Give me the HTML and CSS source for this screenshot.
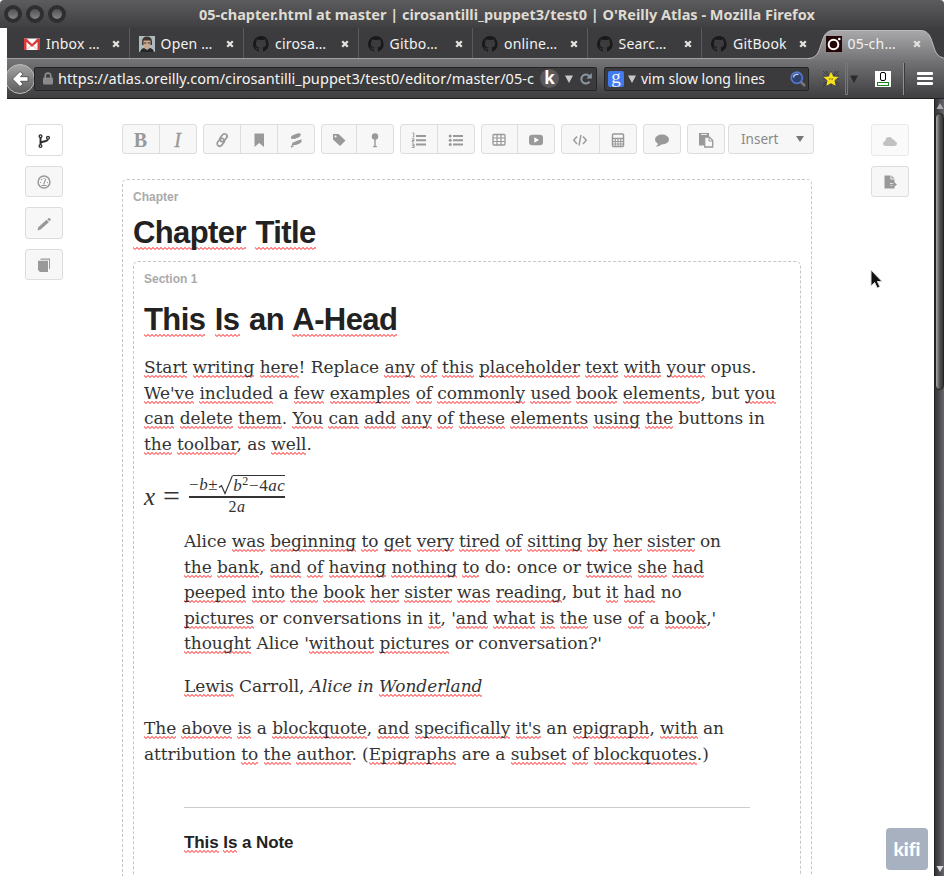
FILE: index.html
```html
<!DOCTYPE html>
<html lang="en">
<head>
<meta charset="utf-8">
<title>05-chapter.html at master</title>
<link rel="stylesheet" href="styles.css">
</head>
<body>
<svg width="0" height="0" class="defs">
  <symbol id="gh" viewBox="0 0 16 16"><path fill="#191919" d="M8 0a8 8 0 0 0-2.500 15.600c.4.100.500-.2.500-.4v-1.500c-2.200.5-2.700-1-2.700-1-.4-.9-.9-1.200-.9-1.200-.7-.5.1-.5.1-.5.8.1 1.200.8 1.200.8.7 1.200 1.900.9 2.300.7.1-.5.3-.9.500-1.100-1.800-.2-3.600-.9-3.600-4 0-.9.300-1.600.8-2.100-.1-.2-.4-1 .1-2.100 0 0 .7-.2 2.200.8a7.600 7.600 0 0 1 4 0c1.500-1 2.200-.8 2.200-.8.4 1.100.2 1.900.1 2.100.5.600.8 1.300.8 2.100 0 3.100-1.900 3.700-3.700 3.900.3.300.6.700.6 1.500v2.200c0 .2.100.5.500.4A8 8 0 0 0 8 0z"/></symbol>
  <symbol id="close" viewBox="0 0 8 8"><path d="M1.200 1.200l5.600 5.600M6.800 1.200L1.200 6.800" stroke="#e2e2de" stroke-width="2.300" fill="none"/></symbol>
</svg>
<div class="window">
  <header class="titlebar">
    <div class="lights"><i></i><i></i><i></i></div>
    <div class="wtitle">05-chapter.html at master | cirosantilli_puppet3/test0 | O'Reilly Atlas - Mozilla Firefox</div>
  </header>
  <nav class="tabs">
    <div class="tab"><svg class="fav" viewBox="0 0 16 16"><path fill="#fff" d="M0 2.500h16v11.500H0z"/><path fill="#d93a3a" d="M0 2.500h2.500L8 8l5.500-5.500H16V14h-2.500V6L8 11 2.500 6v8H0z"/><path d="M3 13.500l4-4M13 13.500l-4-4" stroke="#e6a5a5" fill="none"/></svg><span class="tt">Inbox …</span><svg class="x"><use href="#close"/></svg></div>
    <div class="tab"><svg class="fav" viewBox="0 0 16 16"><path fill="#aebbc0" d="M0 0h16v16H0z"/><path fill="#40362f" d="M3 6q0-5.500 5-5.500T13 6v3H3z"/><path fill="#c9a88f" d="M4.500 4.500h7V9q-.5 4.500-3.500 4.500T4.500 9z"/><path fill="#3a2e29" d="M5 6.500h2.300v1H5zM8.700 6.500H11v1H8.700z"/><path fill="#24282b" d="M1 16q1-3.500 4-4l3 2 3-2q3 .5 4 4z"/></svg><span class="tt">Open …</span><svg class="x"><use href="#close"/></svg></div>
    <div class="tab"><svg class="fav"><use href="#gh"/></svg><span class="tt">cirosa…</span><svg class="x"><use href="#close"/></svg></div>
    <div class="tab"><svg class="fav"><use href="#gh"/></svg><span class="tt">Gitbo…</span><svg class="x"><use href="#close"/></svg></div>
    <div class="tab"><svg class="fav"><use href="#gh"/></svg><span class="tt">online…</span><svg class="x"><use href="#close"/></svg></div>
    <div class="tab"><svg class="fav"><use href="#gh"/></svg><span class="tt">Searc…</span><svg class="x"><use href="#close"/></svg></div>
    <div class="tab last"><svg class="fav"><use href="#gh"/></svg><span class="tt">GitBook</span><svg class="x"><use href="#close"/></svg></div>
    <div class="tab active"><svg class="shape" viewBox="0 0 140 30"><defs><linearGradient id="tg" x2="0" y2="1"><stop offset="0" stop-color="#a9a9ab"/><stop offset="1" stop-color="#757577"/></linearGradient></defs><path fill="url(#tg)" d="M0 30v-1.500q8 0 11-8l4-12Q18 .5 25 .5h88q7 0 10 8l4 12q3 8 13 8V30z"/><path fill="none" stroke="#bbb" d="M0 28.500q8 0 11-8l4-12Q18 .5 25 .5h88q7 0 10 8l4 12q3 8 13 8"/></svg><svg class="fav" viewBox="0 0 16 16"><path fill="#250606" d="M0 0h16v16H0z"/><circle cx="7.500" cy="8.500" r="4.800" fill="none" stroke="#fff" stroke-width="2"/><circle cx="13.300" cy="3" r="1.300" fill="#fff"/></svg><span class="tt">05-ch…</span><svg class="x"><use href="#close"/></svg></div>
  </nav>
  <div class="navbar">
    <svg class="back" viewBox="0 0 30 32"><defs><linearGradient id="bg" x2="0" y2="1"><stop offset="0" stop-color="#a5a5a5"/><stop offset="1" stop-color="#5b5b5b"/></linearGradient></defs><circle cx="13" cy="16" r="14.500" fill="url(#bg)" stroke="#bcbcbc"/><path d="M5.500 16L13 8.500l3 2.500-2.500 2.700H21v4.600h-7.500L16 21l-3 2.500z" fill="#fff" stroke="#444" stroke-width=".8"/></svg>
    <div class="url"><svg class="lock" viewBox="0 0 10 13"><path d="M2.200 6V4a2.800 2.800 0 0 1 5.600 0v2" fill="none" stroke="#8b8b8b" stroke-width="1.700"/><rect y="5.500" width="10" height="7" rx="1" fill="#8b8b8b"/></svg><span class="addr">https://atlas.oreilly.com/cirosantilli_puppet3/test0/editor/master/05-c</span><b class="k">k</b><svg class="dd" viewBox="0 0 8 8"><path d="M0 .5h8L4 8z" fill="#c8c8c6"/></svg><svg class="reload" viewBox="0 0 12 12"><path d="M9.500 8.600A4.500 4.500 0 1 1 9.200 3" fill="none" stroke="#8b99a5" stroke-width="2"/><path d="M11.800 0v5.500H6.300z" fill="#8b99a5"/></svg></div>
    <div class="search"><b class="g">g</b><svg class="dd" viewBox="0 0 8 8"><path d="M0 .5h8L4 8z" fill="#c8c8c6"/></svg><span>vim slow long lines</span><svg class="mag" viewBox="0 0 16 16"><path d="M10.500 10.500L15 15" stroke="#777" stroke-width="2.600"/><circle cx="6.800" cy="6.800" r="5.600" fill="#30436e" stroke="#5577d0" stroke-width="1.700"/><path d="M3.500 6.500a3.500 3.500 0 0 1 5-3" fill="none" stroke="#b9caf0" stroke-width="1.500"/></svg></div>
    <svg class="star" viewBox="0 0 16 16"><path d="M0 0l16 16M16 0L0 16M8 0v16M0 8h16M3 0l10 16M13 0L3 16M0 4l16 9M16 4L0 13" stroke="#303032" stroke-width=".7"/><path d="M8 .8l2.200 4.700 5.300.5-4 3.500 1.200 5.300L8 12.200l-4.700 2.600 1.200-5.300L.5 6l5.300-.5z" fill="#f9e21c"/><path d="M6.900 7v2M9.100 7v2" stroke="#60550a" stroke-width=".8"/></svg>
    <i class="grip"></i>
    <svg class="dd2" viewBox="0 0 8 8"><path d="M0 .5h8L4 8z" fill="#2a2a2c"/></svg>
    <svg class="ext" viewBox="0 0 16 16"><path fill="#fff" d="M0 0h16v16H0z"/><rect x="5.500" y="1.500" width="5" height="8" rx="1.500" fill="none" stroke="#000"/><rect x="2.500" y="11.500" width="11" height="3" fill="none" stroke="#17871d"/></svg>
    <i class="sep"></i>
    <div class="burger"><i></i><i></i><i></i></div>
  </div>
  <div class="view">
    <aside class="left">
      <div class="sb white"><svg viewBox="0 0 16 16" fill="none" stroke="#2b2b2b"><g stroke-width="1.300"><circle cx="4.500" cy="3.300" r="1.400"/><circle cx="4.500" cy="13" r="1.400"/><circle cx="12" cy="4.800" r="1.400"/></g><path d="M4.500 5v6.500M4.500 10c1-2 7-1 7.300-3.700" stroke-width="1.900"/></svg></div>
      <div class="sb s31"><svg viewBox="0 0 16 16" fill="none" stroke="#999"><circle cx="8" cy="8" r="5.900" stroke-width="1.500"/><path d="M7.500 10.500L9.800 5M4 8.500h1M11 8.500h1M5 5.200l.8.800M8 4v1M5.500 11.500h5" stroke-width="1.100"/></svg></div>
      <div class="sb"><svg viewBox="0 0 16 16" fill="#999"><path d="M1.500 14.500l.8-3.300 8.300-7.400 2.300 2.400-8.300 7.300zM11.300 3.200l1.100-1q.7-.6 1.500.1l.6.7q.6.700-.1 1.400l-1 .9z"/></svg></div>
      <div class="sb s31"><svg viewBox="0 0 16 16" fill="#999"><path d="M4.500 1.500H14V12h-1V2.800H4.500z"/><path d="M2 3.700h10V15H4l-2-2z"/></svg></div>
    </aside>
    <main>
      <div class="toolbar">
        <div class="grp"><span class="w37"><b class="ser">B</b></span><span><i class="ser it">I</i></span></div>
        <div class="grp"><span class="w37"><svg viewBox="0 0 16 16" fill="none" stroke="#999" stroke-width="1.700"><rect x="6.700" y="1.300" width="5" height="8.500" rx="2.500" transform="rotate(38 9.200 6)"/><rect x="4.300" y="6" width="5" height="8.500" rx="2.500" transform="rotate(38 6.800 10.200)"/></svg></span><span class="w37"><svg viewBox="0 0 16 16" fill="#999"><path d="M3.500 1.500h9.500v13.500L8.200 11 3.500 15z"/></svg></span><span><svg viewBox="0 0 16 16" fill="#999"><path d="M3 6.800q-.8-2.100 1.300-3.300L8.500 1.700q3.300-1.200 4.500.7L11.500 5 7 7z"/><path d="M3.500 13.300l1-2.600 4-1.600 5-1.800q.6 2.700-1.300 4L8 13.100z"/><path d="M3 15l2.500-1.300" stroke="#999" stroke-width="1.500"/><path d="M2 9.400L13.500 5" stroke="#f7f7f7" stroke-width="1.100"/></svg></span></div>
        <div class="grp"><span class="w35"><svg viewBox="0 0 16 16" fill="#999"><path fill-rule="evenodd" d="M2 2h5.500L14.500 8.500 9 14 2 7.500zM4.500 3.500a1 1 0 1 0 .1 2 1 1 0 0 0 0-2z"/></svg></span><span><svg viewBox="0 0 16 16" fill="#999"><circle cx="8" cy="4.500" r="3.200"/><path d="M7.300 7h1.400v7h1.200v1.200H6.100V14h1.200z"/></svg></span></div>
        <div class="grp"><span class="w37"><svg viewBox="0 0 16 16" fill="#999"><path d="M5 3h10v2H5zM5 7.300h10v2H5zM5 11.600h10v2H5z"/><path d="M1.500 1h1.300v4H1.700M.8 6.800h2.300v1.700H1.200V10h2M.8 12h2.300v3.500H.8M1.200 13.700h2" fill="none" stroke="#999"/></svg></span><span><svg viewBox="0 0 16 16" fill="#999"><path d="M5 3h10v2H5zM5 7.300h10v2H5zM5 11.600h10v2H5z"/><circle cx="2.200" cy="4" r="1.500"/><circle cx="2.200" cy="8.300" r="1.500"/><circle cx="2.200" cy="12.600" r="1.500"/></svg></span></div>
        <div class="grp"><span class="w36"><svg viewBox="0 0 16 16" fill="none" stroke="#999"><rect x="2" y="2.500" width="12" height="10.500" rx="1" stroke-width="1.300"/><path d="M2 6h12M2 9.500h12M6 2.500V13M10 2.500V13" stroke-width="1.200"/></svg></span><span><svg viewBox="0 0 16 16"><rect x="1" y="2.800" width="14" height="10.500" rx="3" fill="#999"/><path d="M6.300 5.300L11 8l-4.700 2.700z" fill="#fff"/></svg></span></div>
        <div class="grp"><span class="w38"><svg viewBox="0 0 16 16" fill="none" stroke="#999" stroke-width="1.400"><path d="M5 4.500L1.700 8.300 5 12M11 4.500l3.300 3.800L11 12M9 3L7 13.500"/></svg></span><span><svg viewBox="0 0 16 16" fill="none" stroke="#999"><rect x="2.500" y="2" width="11" height="12.500" rx="1" stroke-width="1.500"/><path d="M2.500 6.500h11" stroke-width="1.500"/><path d="M3 9.500h10M3 12h10M5.300 7v7M8 7v7M10.700 7v7" /></svg></span></div>
        <div class="grp one"><span><svg viewBox="0 0 16 16" fill="#999"><ellipse cx="8" cy="7.500" rx="7" ry="5"/><path d="M3 10l1 2.500-2.300 2q4 .2 6-2.500z"/></svg></span></div>
        <div class="grp one"><span><svg viewBox="0 0 16 16"><path fill="#999" d="M1 1h10v4H6.500v8.500H1z"/><path d="M3 2.500h6" stroke="#eee"/><path d="M6.700 5.200h4.800l3.200 3.200V15h-8z" fill="#f7f7f7" stroke="#999" stroke-width="1.300"/><path d="M11 5.200V9h3.500" fill="none" stroke="#999"/></svg></span></div>
        <div class="grp insert"><em>Insert</em><svg class="caret" viewBox="0 0 8 6"><path d="M0 0h8L4 6z" fill="#777"/></svg></div>
      </div>
      <section class="chapter">
        <div class="label">Chapter</div>
        <h1><u>Chapter</u> <u>Title</u></h1>
        <section class="sect">
          <div class="label">Section 1</div>
          <h1><u>This</u> <u>Is</u> an <u>A-Head</u></h1>
          <p><u>Start</u> <u>writing</u> <u>here</u>! Replace <u>any</u> <u>of</u> <u>this</u> <u>placeholder</u> <u>text</u> <u>with</u> <u>your</u> opus.<br><u>We've</u> <u>included</u> a <u>few</u> <u>examples</u> <u>of</u> <u>commonly</u> <u>used</u> <u>book</u> <u>elements</u>, but <u>you</u><br><u>can</u> <u>delete</u> <u>them</u>. <u>You</u> <u>can</u> <u>add</u> <u>any</u> <u>of</u> <u>these</u> <u>elements</u> <u>using</u> <u>the</u> buttons in<br><u>the</u> <u>toolbar</u>, as <u>well</u>.</p>
          <div class="math"><i class="mx">x</i><span class="eq">=</span><div class="frac"><div class="num"><span>−<i>b</i>±</span><svg viewBox="0 0 15 20"><path d="M1 12.500l2.500-1.800L7 18.500 14.500.5" fill="none" stroke="#333" stroke-width="1.100"/></svg><span class="rad"><i>b</i><sup>2</sup>−4<i>ac</i></span></div><div class="den">2<i>a</i></div></div></div>
          <blockquote>
            <p>Alice <u>was</u> <u>beginning</u> <u>to</u> <u>get</u> <u>very</u> <u>tired</u> <u>of</u> <u>sitting</u> <u>by</u> <u>her</u> <u>sister</u> on<br><u>the</u> <u>bank</u>, <u>and</u> <u>of</u> <u>having</u> <u>nothing</u> <u>to</u> do: once or <u>twice</u> <u>she</u> <u>had</u><br><u>peeped</u> <u>into</u> <u>the</u> <u>book</u> <u>her</u> <u>sister</u> <u>was</u> <u>reading</u>, but <u>it</u> <u>had</u> no<br><u>pictures</u> or conversations in <u>it</u>, '<u>and</u> <u>what</u> <u>is</u> <u>the</u> use <u>of</u> a <u>book</u>,'<br><u>thought</u> Alice '<u>without</u> <u>pictures</u> or conversation?'</p>
            <p><u>Lewis</u> Carroll, <i>Alice in <u>Wonderland</u></i></p>
          </blockquote>
          <p><u>The</u> <u>above</u> <u>is</u> a <u>blockquote</u>, <u>and</u> <u>specifically</u> <u>it's</u> an <u>epigraph</u>, <u>with</u> an<br>attribution <u>to</u> <u>the</u> <u>author</u>. (<u>Epigraphs</u> are a <u>subset</u> <u>of</u> <u>blockquotes</u>.)</p>
          <div class="note"><h5><u>This</u> <u>Is</u> a Note</h5></div>
        </section>
      </section>
    </main>
    <aside class="right">
      <div class="sb dim"><svg viewBox="0 0 16 16" fill="#999"><path d="M4 13q-3 0-3-2.500 0-2 2.300-2.500.2-4 4-4 2.700 0 3.500 2.500 1.800-.3 2.200 1.800 2 .5 2 2.500T12.500 13z"/></svg></div>
      <div class="sb s31"><svg viewBox="0 0 16 16" fill="#999"><path d="M2.500 1.500h6V5.500h4V9H8v3h4.500v2.500h-10zM9.500 1.500l3 3h-3z"/><path d="M8 9.700h3.300V7.500l3.700 3-3.700 3v-2H8z"/></svg></div>
    </aside>
    <div class="scroll"><svg viewBox="0 0 8 8"><path d="M4 1l3.500 6h-7z" fill="#aaa"/></svg><i class="thumb"></i><svg class="dn" viewBox="0 0 8 8"><path d="M4 7L.5 1h7z" fill="#ddd"/></svg></div>
  </div>
  <div class="kifi">kifi</div>
  <svg class="cursor" viewBox="0 0 14 22"><path d="M1 1v16l3.700-3.500L7.200 19l2.700-1.200-2.500-5.300H12z" fill="#111" stroke="#ddd"/></svg>
</div>
</body>
</html>
```
FILE: styles.css
```css
* { box-sizing: border-box; }
body { margin: 0; background: #fff; overflow: hidden; }
svg { display: block; flex: none; }
.defs { position: absolute; }
.window { position: relative; width: 944px; height: 876px; overflow: hidden; display: flex; flex-direction: column; font-family: "Noto Sans", sans-serif; }

.titlebar { flex: none; height: 28px; background: linear-gradient(#5c5c5e, #3f3f41); border-radius: 4px 4px 0 0; display: flex; align-items: center; padding-left: 4px; }
.lights { display: flex; gap: 4px; }
.lights i { width: 18px; height: 18px; border-radius: 50%; border: 4px solid #2e2e30; background: linear-gradient(#505052, #858587); }
.wtitle { margin-left: 133px; font-size: 14.500px; font-weight: bold; color: #dfdbd2; white-space: nowrap; }

.tabs { flex: none; height: 31px; margin-left: 7px; background: #3c3c3e; border-bottom: 1px solid #a0a0a2; display: flex; padding-left: 8px; }
.tab { width: 114.500px; flex: none; display: flex; align-items: center; padding: 2px 9px 0; border-right: 1px solid #5c5a56; color: #f2f2f0; font-size: 14px; letter-spacing: .2px; position: relative; }
.tab.last, .tab.active { border-right-color: transparent; }
.fav { width: 16px; height: 16px; }
.tt { margin-left: 6px; width: 66px; white-space: nowrap; margin-top: -1px; }
.x { width: 8px; height: 8px; margin-left: 0; }
.shape { position: absolute; left: -9px; top: 2px; width: 140px; height: 30px; }
.active .fav, .active .tt, .active .x { position: relative; }

.navbar { flex: none; height: 40px; margin-left: 7px; background: linear-gradient(#757577, #3e3e40); border-bottom: 1px solid #222; display: flex; align-items: center; }
.back { width: 30px; height: 32px; }
.url, .search { height: 24px; background: #3b3b3d; border: 1px solid #242426; border-radius: 2px; display: flex; align-items: center; color: #f4f4f2; font-size: 14px; white-space: nowrap; }
.url { width: 563px; margin-left: -3px; padding-left: 8px; }
.lock { width: 10px; height: 13px; }
.addr { width: 478px; margin-left: 5px; font-size: 14.500px; letter-spacing: .07px; margin-top: -1px; }
.k { width: 19px; height: 19px; margin-left: 4px; border-radius: 50%; background: #5a5a5c; color: #fff; font-size: 17px; line-height: 17px; text-align: center; }
.dd { width: 8px; height: 8px; margin-left: 6px; }
.reload { width: 12px; height: 12px; margin-left: 7px; }
.search { width: 205px; margin-left: 7px; padding-left: 3px; }
.g { width: 16px; height: 16px; background: #4179f0; border-radius: 2px; font: 19px/11px "Liberation Serif", serif; text-align: center; }
.search .dd { margin-left: 4px; }
.search span { width: 144px; margin-left: 5px; }
.mag { width: 16px; height: 16px; margin-left: 5px; }
.star { width: 16px; height: 16px; margin-left: 14px; }
.grip { width: 3px; height: 32px; margin-left: 6px; border: 1px solid #777779; }
.dd2 { width: 8px; height: 8px; margin-left: 2px; }
.ext { width: 16px; height: 16px; margin-left: 17px; }
.sep { width: 2px; height: 32px; margin-left: 12px; border-left: 1px solid #8a929a; border-right: 1px solid #3a3a3a; }
.burger { margin-left: 12px; display: grid; gap: 2px; }
.burger i { width: 16px; height: 3px; background: #fff; border-radius: 1px; }

.view { flex: 1; min-height: 0; display: flex; margin-left: 7px; background: #fff; }
.left, .right { flex: none; padding-top: 25px; }
.left { width: 115px; padding-left: 18px; }
.right { width: 122px; padding-left: 59px; }
.sb { width: 38px; height: 32px; margin-bottom: 10px; border: 1px solid #ddd; border-radius: 3px; background: #f7f7f7; display: flex; align-items: center; justify-content: center; padding-top: 1px; }
.sb svg, .grp svg { width: 16px; height: 16px; }
.sb.white { background: #fff; }
.sb.s31 { height: 31px; }
.sb.dim { opacity: .6; }

main { width: 690px; flex: none; padding-top: 25px; }
.toolbar { display: flex; gap: 6px; width: 692px; }
.grp { height: 30px; border: 1px solid #ddd; border-radius: 3px; background: #f7f7f7; display: flex; flex: none; }
.grp:nth-child(1), .grp:nth-child(4) { width: 75px; }
.grp:nth-child(2) { width: 112px; }
.grp:nth-child(3) { width: 73px; }
.grp:nth-child(5) { width: 74px; }
.grp:nth-child(6) { width: 76px; }
.grp.one { width: 38px; }
.grp.insert { width: 86px; margin-left: -3px; align-items: center; padding: 0 9px 0 12px; justify-content: space-between; }
.grp span { flex: 1; display: flex; align-items: center; justify-content: center; padding: 2px 1px 0 0; }
.grp span + span { border-left: 1px solid #ddd; }
.grp .w35 { flex: 0 0 34px; }
.grp .w36 { flex: 0 0 35px; }
.grp .w37 { flex: 0 0 36px; }
.grp span + .w37 { flex-basis: 37px; }
.grp .w38 { flex: 0 0 37px; }
.ser { font: bold 20px "Liberation Serif", serif; color: #999; margin-top: 1px; }
.ser.it { font-style: italic; font-weight: normal; -webkit-text-stroke: .3px #999; }
.insert em { font-style: normal; font-size: 13.500px; color: #888; }
.grp .caret { width: 8px; height: 6px; }

.chapter { margin-top: 25px; height: 800px; border: 1px dashed #c6c6c6; border-radius: 5px; padding: 10px; }
.label { font: bold 12px/15px "Liberation Sans", Arial, sans-serif; color: #aaa; }
h1, h5 { margin: 0; font-family: "Liberation Sans", Arial, sans-serif; font-weight: bold; color: #222; }
h1 { font-size: 31px; line-height: 40px; letter-spacing: -.6px; word-spacing: 1.500px; }
.chapter > h1 { margin-top: 8px; }
.sect { width: 668px; height: 800px; margin-top: 8px; border: 1px dashed #c6c6c6; border-radius: 5px; padding: 10px; }
.sect > h1 { margin: 13px 0 15px; }
p { margin: 0 0 17px; font: 17px/25.500px "DejaVu Serif", serif; color: #333; white-space: nowrap; letter-spacing: -.07px; }
u { text-decoration: none; padding-bottom: 1px; background: url("data:image/svg+xml,%3Csvg xmlns='http://www.w3.org/2000/svg' width='4' height='3'%3E%3Cpath d='M-1 -.5L2 2.500L5 -.5' fill='none' stroke='%23f00' stroke-width='.9'/%3E%3C/svg%3E") left bottom / 4px 3px repeat-x; }
h1 u { padding-bottom: 0; }
.math { display: flex; height: 55px; font-family: "Liberation Serif", serif; color: #333; }
.mx { font-size: 25px; line-height: 44px; width: 19px; margin-top: 1px; }
.eq { font-size: 30px; line-height: 44px; width: 26px; }
.frac { width: 96px; }
.num { height: 24px; display: flex; border-bottom: 2px solid #333; font-size: 17px; white-space: nowrap; }
.num svg { width: 15px; height: 20px; margin-top: 1px; }
.num span { line-height: 22px; letter-spacing: .6px; }
.num .rad { border-top: 1px solid #333; margin-top: 1px; height: 20px; line-height: 20px; width: 52px; }
.num sup { font-size: 12px; line-height: 0; vertical-align: 6px; }
.den { font-size: 16px; text-align: center; line-height: 17px; letter-spacing: .5px; }
blockquote { margin: 0 40px; }
.note { margin: 40px 40px 0; border-top: 1px solid #ccc; padding-top: 25px; }
h5 { font-size: 17px; line-height: 20px; letter-spacing: -.08px; }

.scroll { width: 10px; flex: none; background: linear-gradient(90deg, #333, #66656f); border-left: 1px solid #222; display: flex; flex-direction: column; align-items: center; padding: 3px 0; }
.scroll svg { width: 8px; height: 8px; }
.thumb { width: 9px; height: 277px; margin-top: 3px; border-radius: 5px; border: 1px solid #222; background: linear-gradient(90deg, #aaa, #555 50%, #333); }
.scroll .dn { margin-top: auto; }
.kifi { position: absolute; left: 886px; top: 828px; width: 42px; height: 42px; border-radius: 4px; background: #a7b1bf; color: #fff; font: 900 19px/42px Lato, sans-serif; font-variant-ligatures: none; text-align: center; }
.cursor { position: absolute; left: 870px; top: 269px; width: 14px; height: 22px; }
```
